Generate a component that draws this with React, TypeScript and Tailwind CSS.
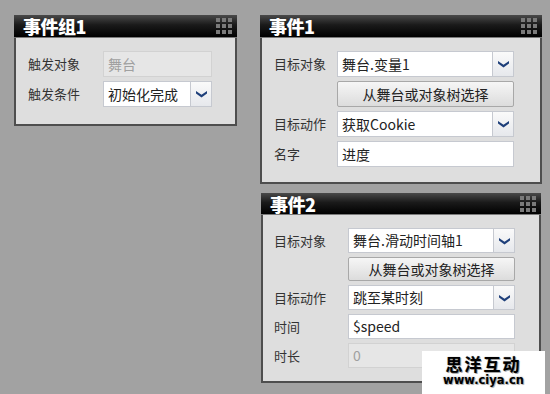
import React from "react";

const FONT = { fontFamily: '"Noto Sans CJK SC", "Noto Sans", sans-serif' };

function GridIcon() {
  return (
    <div className="grid grid-cols-3 gap-[2px]">
      {Array.from({ length: 9 }).map((_, i) => (
        <div key={i} className="w-[4px] h-[4px] bg-[#7a7a7a]" />
      ))}
    </div>
  );
}

function Header({ title, h }: { title: string; h: string }) {
  return (
    <div
      className={`${h} flex items-center justify-between pl-[9px] pr-[5px] bg-[linear-gradient(to_bottom,#4a4a4a_0%,#1a1a1a_45%,#000_100%)] border-b border-[#7a7a7a]`}
    >
      <span className="text-white font-black text-[18px] leading-none tracking-[-0.5px]">{title}</span>
      <GridIcon />
    </div>
  );
}

function Chevron() {
  return (
    <svg width="11" height="8" viewBox="0 0 11 8">
      <path d="M0 1 L5.5 4.8 L11 1 L11 3.6 L5.5 7.6 L0 3.6 Z" fill="#1e3f7a" />
    </svg>
  );
}

function Select({ value, w, h }: { value: string; w: string; h: string }) {
  return (
    <div className={`${w} ${h} flex bg-white border border-[#c6c9d0]`}>
      <div className="flex-1 flex items-center pl-[4px] text-[14px] text-[#222]">{value}</div>
      <div className="w-[21px] flex items-center justify-center border-l border-[#c6c9d0] bg-[linear-gradient(to_bottom,#fafafa,#e6e8ec)]">
        <Chevron />
      </div>
    </div>
  );
}

function Input({ value, w, h, disabled }: { value: string; w: string; h: string; disabled?: boolean }) {
  return (
    <div
      className={`${w} ${h} flex items-center pl-[4px] text-[14px] border ${
        disabled ? "bg-[#e6e6e6] border-[#d2d2d2] text-[#a0a0a0]" : "bg-white border-[#c6c9d0] text-[#222]"
      }`}
    >
      {value}
    </div>
  );
}

function Button({ label, w, h }: { label: string; w: string; h: string }) {
  return (
    <div
      className={`${w} ${h} flex items-center justify-center text-[14px] text-[#222] border border-[#a8a8a8] rounded-[2px] bg-[linear-gradient(to_bottom,#f6f6f6,#dcdcdc)]`}
    >
      {label}
    </div>
  );
}

function Row({ label, lw, children }: { label: string; lw: string; children: React.ReactNode }) {
  return (
    <div className="flex items-center">
      <div className={`${lw} text-[13px] text-[#333]`}>{label}</div>
      {children}
    </div>
  );
}

export default function App() {
  return (
    <div className="relative w-[550px] h-[394px] bg-[#a2a2a2] overflow-hidden flex pt-[15px] pl-[14px]" style={FONT}>
      {/* Left panel */}
      <div className="w-[223px] flex flex-col">
        <Header title="事件组1" h="h-[23px]" />
        <div className="h-[88px] bg-[#dedede] border-2 border-t-0 border-[#4e4e4e] pl-[12px] pt-[13px] flex flex-col gap-[4px]">
          <Row label="触发对象" lw="w-[75px]">
            <Input value="舞台" w="w-[109px]" h="h-[26px]" disabled />
          </Row>
          <Row label="触发条件" lw="w-[75px]">
            <Select value="初始化完成" w="w-[109px]" h="h-[26px]" />
          </Row>
        </div>
      </div>

      {/* Right column */}
      <div className="ml-[23px] w-[282px] flex flex-col">
        <div className="flex flex-col">
          <Header title="事件1" h="h-[23px]" />
          <div className="h-[146px] bg-[#dedede] border-2 border-t-0 border-[#4e4e4e] pl-[12px] pt-[13px] flex flex-col gap-[4px]">
            <Row label="目标对象" lw="w-[63px]">
              <Select value="舞台.变量1" w="w-[177px]" h="h-[26px]" />
            </Row>
            <Row label="" lw="w-[63px]">
              <Button label="从舞台或对象树选择" w="w-[177px]" h="h-[26px]" />
            </Row>
            <Row label="目标动作" lw="w-[63px]">
              <Select value="获取Cookie" w="w-[177px]" h="h-[26px]" />
            </Row>
            <Row label="名字" lw="w-[63px]">
              <Input value="进度" w="w-[177px]" h="h-[26px]" />
            </Row>
          </div>
        </div>

        <div className="mt-[9px] ml-[1px] w-[280px] flex flex-col">
          <Header title="事件2" h="h-[22px]" />
          <div className="h-[168px] bg-[#dedede] border-2 border-t-0 border-[#4e4e4e] pl-[11px] pt-[13px] flex flex-col gap-[4px]">
            <Row label="目标对象" lw="w-[74px]">
              <Select value="舞台.滑动时间轴1" w="w-[167px]" h="h-[25px]" />
            </Row>
            <Row label="" lw="w-[74px]">
              <Button label="从舞台或对象树选择" w="w-[167px]" h="h-[24px]" />
            </Row>
            <Row label="目标动作" lw="w-[74px]">
              <Select value="跳至某时刻" w="w-[167px]" h="h-[25px]" />
            </Row>
            <Row label="时间" lw="w-[74px]">
              <Input value="$speed" w="w-[167px]" h="h-[25px]" />
            </Row>
            <Row label="时长" lw="w-[74px]">
              <Input value="0" w="w-[167px]" h="h-[25px]" disabled />
            </Row>
          </div>
        </div>
      </div>

      {/* Watermark */}
      <div className="absolute left-[422px] top-[351px] w-[123px] h-[43px] bg-white flex flex-col items-center pt-[3px]">
        <div
          className="text-[17px] font-bold leading-[19px] tracking-[2px] text-black"
          style={{ textShadow: "0 0 1px #777, 1px 1px 0 #aaa" }}
        >
          思洋互动
        </div>
        <div
          className="text-[11.5px] font-bold leading-[15px] text-black"
          style={{ fontFamily: '"DejaVu Sans", sans-serif', textShadow: "0 0 2px #999, 1px 1px 0 #bbb" }}
        >
          www.ciya.cn
        </div>
      </div>
    </div>
  );
}
